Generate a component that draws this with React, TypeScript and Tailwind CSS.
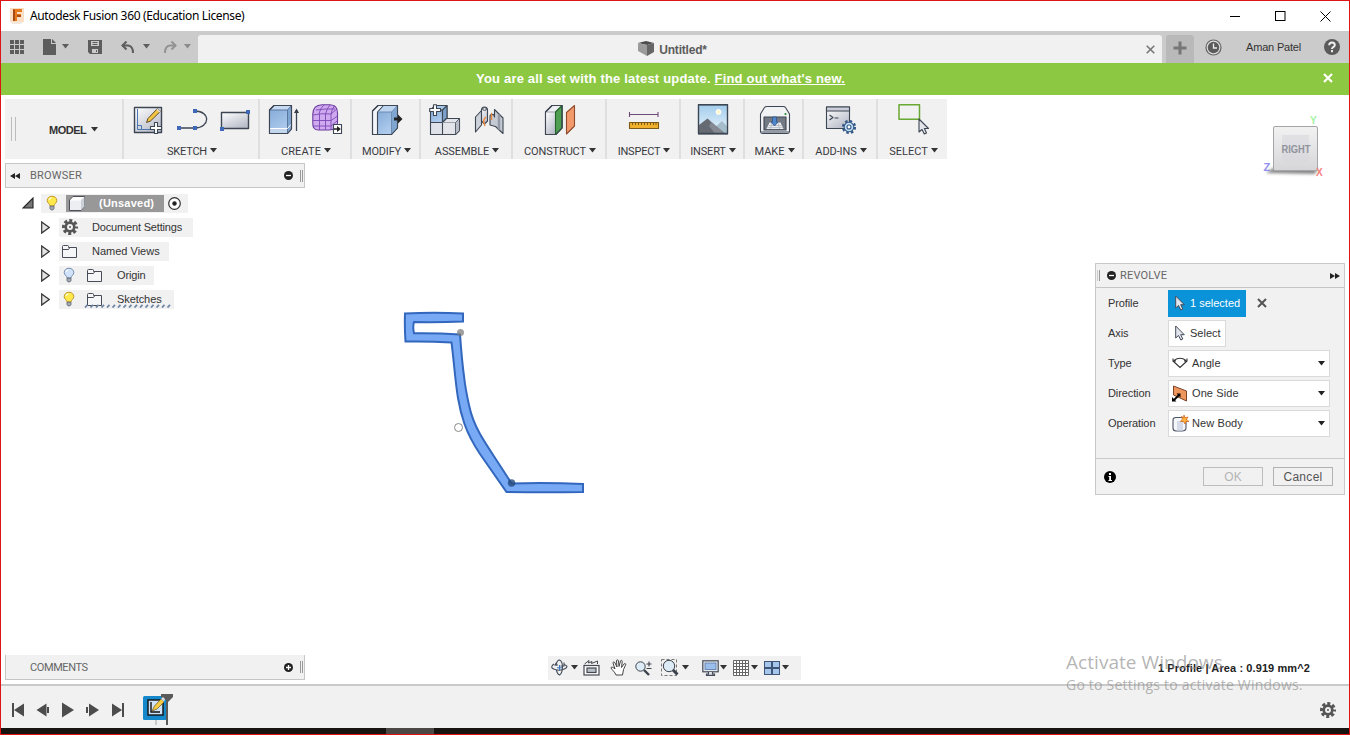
import type { ReactNode } from "react";

const Caret = ({ className = "text-[#333]" }: { className?: string }) => (
  <svg className={`shrink-0 ${className}`} width="7" height="5" viewBox="0 0 7 5" fill="currentColor">
    <path d="M0 0H7L3.5 4.6Z" />
  </svg>
);

const Icon = ({ children }: { children: ReactNode }) => (
  <svg className="shrink-0" width="32" height="32" viewBox="0 0 32 32" fill="none" stroke="#3d4653" strokeWidth="1.1" strokeLinejoin="round">
    {children}
  </svg>
);

const Gradients = () => (
  <svg className="absolute" width="0" height="0">
    <defs>
      <linearGradient id="silver" x1="0" y1="0" x2="0.7" y2="1">
        <stop offset="0" stopColor="#fff" />
        <stop offset="1" stopColor="#b8bcc8" />
      </linearGradient>
      <linearGradient id="blue" x1="0" y1="0" x2="0.5" y2="1">
        <stop offset="0" stopColor="#86acd8" />
        <stop offset="1" stopColor="#aecbed" />
      </linearGradient>
      <linearGradient id="sky" x1="0" y1="0" x2="0" y2="1">
        <stop offset="0" stopColor="#a3cdec" />
        <stop offset="1" stopColor="#eaf6fd" />
      </linearGradient>
      <linearGradient id="cube" x1="0" y1="0" x2="0" y2="1">
        <stop offset="0" stopColor="#f2f2f3" />
        <stop offset="1" stopColor="#d6d6d8" />
      </linearGradient>
      <filter id="soft" x="-30%" y="-100%" width="160%" height="300%">
        <feGaussianBlur stdDeviation="1.6" />
      </filter>
    </defs>
  </svg>
);

const SketchIcon = () => (
  <Icon>
    <rect x="2.500" y="3.500" width="27" height="25" fill="url(#silver)" strokeWidth="1.400" />
    <path d="M5.500 5V25.500H20M5.500 21.500H9.500V25" stroke="#4a78b5" strokeWidth="1" />
    <path d="M14.500 18.500L16 14.500L25.500 4.500L28.500 7.300L18.500 17Z" fill="#f5c542" stroke="#5a4a2a" strokeWidth="1" />
    <path d="M25 5L28 8" stroke="#ddd" strokeWidth="1.600" />
    <path d="M22.500 18.500H25.500V22.500H29.500V25.500H25.500V29.500H22.500V25.500H18.500V22.500H22.500Z" fill="#fff" strokeWidth="1.100" />
  </Icon>
);
const LineIcon = () => (
  <Icon>
    <path d="M3 24H19C34 24 35 7 19 7" strokeWidth="1.300" />
    <path d="M1 22h4v4H1zM17 22h4v4h-4zM17 5h4v4h-4z" fill="#3f68b8" stroke="none" />
  </Icon>
);
const RectIcon = () => (
  <Icon>
    <rect x="1.500" y="8.500" width="27" height="16" fill="url(#silver)" strokeWidth="1.400" />
    <path d="M26 6h4v4h-4zM0 23h4v4H0z" fill="#3f68b8" stroke="none" />
  </Icon>
);
const ExtrudeIcon = () => (
  <Icon>
    <path d="M1.500 6L6 1.500H23.500V25L19.500 29.500H1.500Z" fill="#c5daf2" />
    <path d="M1.500 6H19.500V29.500H1.500Z" fill="url(#blue)" stroke="none" />
    <path d="M1.500 25H19.500V29.500H1.500Z" fill="#c4d6ec" stroke="none" />
    <path d="M19.500 6L23.500 1.500V25L19.500 29.500Z" fill="#7fa5d1" stroke="none" />
    <path d="M1.500 6H19.500L23.500 1.500M19.500 6V29" stroke="#58779e" strokeWidth="1" />
    <path d="M2 24.500H19.500L23 20.500" stroke="#fff" strokeWidth="1" />
    <path d="M1.500 6L6 1.500H23.500V25L19.500 29.500H1.500Z" />
    <path d="M28.500 27V6" strokeWidth="1.300" />
    <path d="M26 9L28.500 4.500L31 9Z" fill="#343c47" stroke="none" />
  </Icon>
);
const FormIcon = () => (
  <Icon>
    <path d="M.800 10C1 4 5 1 10 .800H18C23 1 25.500 4 25.500 9V19C25 23 22 26 17 26H6C3 26 .800 24 .800 20Z" fill="#cfaaf0" stroke="#6a3d9d" />
    <path d="M1 11Q10 9 19 10L25 5M19 10V26M1 16.500H19L25.500 12M1 22H19L25 17M7.500 10V26M13.500 10V26M7 10Q8 4 12 1M13.500 10Q15 4 18 1M19 10Q20 5 22.500 1.500M4 6Q14 4.500 23 5" stroke="#7c48b3" strokeWidth=".9" />
    <rect x="21.500" y="20.500" width="8" height="9" fill="#fff" />
    <path d="M22 24.300H25V22L28.800 25L25 28V25.700H22Z" fill="#222" stroke="none" />
  </Icon>
);
const ModifyIcon = () => (
  <Icon>
    <path d="M1.500 7L7 1.500H26.500V24L20.500 30.500H1.500Z" fill="#f1f4f8" />
    <path d="M6.500 8L12 1.500H26.500L20.500 8Z" fill="#bed5ef" stroke="none" />
    <path d="M6.500 8H20.500V30.500H6.500Z" fill="url(#blue)" stroke="none" />
    <path d="M20.500 8L26.500 2V24L20.500 30Z" fill="#7fa5d1" stroke="none" />
    <path d="M6.500 30V8L12 2" />
    <path d="M6.500 8H20.500L26 2M20.500 8V30" stroke="#6987ac" strokeWidth=".9" />
    <path d="M1.500 7L7 1.500H26.500V24L20.500 30.500H1.500Z" />
    <path d="M23 13.500H27V10.500L31.500 15L27 19.500V16.500H23Z" fill="#222" stroke="none" />
  </Icon>
);
const ComponentIcon = () => (
  <Icon>
    <path d="M1.500 18.500H14.500V30.500H1.500Z" fill="#dfe2e9" />
    <path d="M1.500 6H13.500V18.500H1.500Z" fill="url(#blue)" />
    <path d="M1.500 6L6 1.500H18V14L13.500 18.500V6Z" fill="#a8c7e8" />
    <path d="M13.500 6L18 1.500V14L13.500 18.500Z" fill="#7ba0cc" />
    <path d="M13.500 18.500L17.500 14.500H30.500V26.500L26.500 30.500H13.500Z" fill="#e3e5ea" />
    <path d="M26.500 18.500L30.500 14.500V26.500L26.500 30.500Z" fill="#b7bcc7" strokeWidth=".800" />
    <path d="M13.500 18.500H26.500" stroke="#8c929e" strokeWidth=".800" />
    <path d="M4.500 .700H7.500V4.500H11.500V7.500H7.500V11.500H4.500V7.500H.700V4.500H4.500Z" fill="#fff" />
  </Icon>
);
const JointIcon = () => (
  <Icon>
    <path d="M2.500 13L8.500 6.500V21L2.500 28Z" fill="#cdd1d8" />
    <path d="M8.500 6C8.500 2 14.500 2 14.500 6V17L11.500 20L8.500 17Z" fill="url(#silver)" />
    <path d="M21.500 5.500L30 14V29.500L22.500 22.500L17 21V13C17 9.500 21.500 9.500 21.500 13Z" fill="#c5cad3" />
    <path d="M26 10.500V25.500" stroke="#949ba7" strokeWidth="2.500" />
    <ellipse cx="11.500" cy="5" rx="2" ry="1.300" fill="#fff" strokeWidth="1" />
    <path d="M13 13C9 16 11 20 12 22M18.500 9V16" stroke="#ee8a3c" strokeWidth="1.400" />
  </Icon>
);
const PlaneIcon = () => (
  <Icon>
    <path d="M1.500 8L8 1.500H18V24L12 30.500H1.500Z" fill="#eceef1" />
    <path d="M1.500 8H11.500V30.500H1.500Z" fill="url(#silver)" stroke="#8a909b" strokeWidth=".800" />
    <path d="M11.500 8L18 1.500V24L11.500 30.500Z" fill="#4f9f51" stroke="#24622a" />
    <path d="M1.500 8L8 1.500H18V24L12 30.500H1.500Z" />
    <path d="M22.500 8.500L30.500 1.500V22L22.500 30Z" fill="#f39a6d" stroke="#8f4a2a" />
  </Icon>
);
const MeasureIcon = () => (
  <Icon>
    <path d="M1.500 10.500H30M1.500 8V13M30 8V13" stroke="#6e4a78" strokeWidth="1.100" />
    <rect x="1.500" y="18.500" width="29" height="6" fill="#efb02e" stroke="#7c5a19" />
    <path d="M4.500 18.500V21M7.500 18.500V21M10.500 18.500V21M13.500 18.500V21M16.500 18.500V21M19.500 18.500V21M22.500 18.500V21M25.500 18.500V21M28 18.500V21" stroke="#68480f" strokeWidth=".8" />
  </Icon>
);
const ImageIcon = () => (
  <Icon>
    <rect x="1.500" y="1" width="29" height="29" fill="url(#sky)" />
    <circle cx="21.500" cy="8" r="2.500" fill="#fff9cf" stroke="#fff" strokeWidth="1" />
    <path d="M16 25L25 17L30 22V29.500H15Z" fill="#a5bccb" stroke="none" />
    <path d="M2 21L10.500 14.500L19 22L28 29.500H2Z" fill="#666a73" stroke="none" />
    <path d="M10.500 14.500L14 19L12 22L18 29.500H28L19 22Z" fill="#858992" stroke="none" />
    <rect x="1.500" y=".500" width="29" height="29" strokeWidth="1.300" />
  </Icon>
);
const MakeIcon = () => (
  <Icon>
    <path d="M1.500 10L5.500 3.500Q6 2.500 8 2.500H24Q26 2.500 26.500 3.500L30.500 10V27Q30.500 29.500 28 29.500H4Q1.500 29.500 1.500 27Z" fill="#f1f2f4" />
    <path d="M2 27H30Q30 29 28 29H4Q2 29 2 27Z" fill="#959ba5" stroke="none" />
    <rect x="5" y="13" width="22" height="13" fill="#737982" />
    <path d="M7.500 25L10.500 18.500H21.500L24.500 25Z" fill="#e6e9ed" stroke="none" />
    <path d="M10 21.500H22.500M9 23.500H23.500M13 18.500L11.500 25M19 18.500L20.500 25" stroke="#a6acb6" strokeWidth=".6" />
    <path d="M13.500 13H17.500V18H19L15.500 22L12 18H13.500Z" fill="#4d86cb" stroke="#2f568b" strokeWidth=".8" />
    <circle cx="26.500" cy="10" r="1.100" fill="#258d31" stroke="none" />
  </Icon>
);
const AddinsIcon = () => (
  <Icon>
    <rect x="1.500" y="3" width="23" height="21.500" fill="url(#silver)" />
    <rect x="1.500" y="3" width="23" height="4" fill="#cbced8" />
    <path d="M4.500 11L8 13.500L4.500 16M9.500 14H13.500" />
    <circle cx="24" cy="23" r="5.700" stroke="#365b87" strokeWidth="2.800" strokeDasharray="2.400 2.075" />
    <circle cx="24" cy="23" r="4.800" fill="#c1dcf3" stroke="#365b87" />
    <circle cx="24" cy="23" r="2" fill="#fff" stroke="#365b87" />
  </Icon>
);
const SelectIcon = () => (
  <Icon>
    <rect x="1" y=".800" width="20.500" height="14.500" stroke="#69a832" strokeWidth="1.500" />
    <path d="M21 15V28L24 25.500L26.300 30L28.500 29L26.400 24.500H30.500Z" fill="#e3e5ea" />
  </Icon>
);

type GroupProps = { label: string; width: string; tracking: string; children: ReactNode };
const Group = ({ label, width, tracking, children }: GroupProps) => (
  <div className={`flex h-full shrink-0 flex-col items-center pl-[2px] ${width}`}>
    <div className="flex h-10 items-start justify-center gap-3 pt-[5px]">{children}</div>
    <div className="mt-[7px] flex h-3.5 items-center gap-[3px]">
      <span className={`font-[Roboto,sans-serif] text-[11px] leading-[14px] whitespace-nowrap text-[#3a3a3f] ${tracking}`}>{label}</span>
      <Caret className="mb-[3px] text-[#333]" />
    </div>
  </div>
);

const Toolbar = () => (
  <div className="ml-1 flex h-[60px] w-[942px] divide-x-2 divide-[#dedfe0] bg-[#f1f1f1]">
    <div className="flex w-[119px] shrink-0 items-center pl-[6px]">
      <span className="h-6 w-[5px] border-x border-[#bcbcbc]" />
      <span className="ml-[33px] mr-[5px] pt-[2px] text-[11px] font-bold tracking-[-0.5px] text-[#333]">MODEL</span>
      <Caret />
    </div>
    <Group label="SKETCH" width="w-[136px]" tracking="tracking-[-0.2px]"><SketchIcon /><LineIcon /><RectIcon /></Group>
    <Group label="CREATE" width="w-[92px]" tracking="tracking-[0.1px]"><ExtrudeIcon /><FormIcon /></Group>
    <Group label="MODIFY" width="w-[69px]" tracking="tracking-[-0.2px]"><ModifyIcon /></Group>
    <Group label="ASSEMBLE" width="w-[92px]" tracking="tracking-[-0.1px]"><ComponentIcon /><JointIcon /></Group>
    <Group label="CONSTRUCT" width="w-[94px]" tracking="tracking-[-0.150px]"><PlaneIcon /></Group>
    <Group label="INSPECT" width="w-[74px]" tracking="tracking-[-0.2px]"><MeasureIcon /></Group>
    <Group label="INSERT" width="w-[64px]" tracking="tracking-[-0.2px]"><ImageIcon /></Group>
    <Group label="MAKE" width="w-[59px]" tracking="tracking-[0px]"><MakeIcon /></Group>
    <Group label="ADD-INS" width="w-[74px]" tracking="tracking-[-0.1px]"><AddinsIcon /></Group>
    <Group label="SELECT" width="w-[69px]" tracking="tracking-[0px]"><SelectIcon /></Group>
  </div>
);

const ViewCube = () => (
  <svg width="66" height="70" viewBox="0 0 66 70" className="font-[Liberation_Sans,sans-serif]">
    <path d="M6 61L13 56H58L55 62Z" fill="#888" filter="url(#soft)" />
    <rect x="13.500" y="14.500" width="44" height="44" rx="1.500" fill="url(#cube)" stroke="#a5a5a8" />
    <rect x="22" y="23" width="27" height="27" fill="#d8d9dd" opacity=".6" />
    <text x="21.500" y="41" fontSize="11.500" fontWeight="700" fill="#90939d" textLength="29" lengthAdjust="spacingAndGlyphs">RIGHT</text>
    <text x="50" y="11.500" fontSize="10" fontWeight="700" fill="#a4f3a4">Y</text>
    <text x="3.500" y="59" fontSize="11" fontWeight="700" fill="#9090f0">Z</text>
    <text x="56" y="64" fontSize="10" fontWeight="700" fill="#f58080">X</text>
  </svg>
);

const TitleBar = () => (
  <header className="flex h-[30px] shrink-0 items-center bg-white pl-2">
    <svg width="16" height="16" viewBox="0 0 16 16">
      <rect x="1" y="0" width="14" height="14" fill="#fadfc4" />
      <path d="M4 1H13V4H8V6H12V9H8V13H4Z" fill="#e77b22" />
      <path d="M4 1L6 2V13H4ZM8 6L9 7H12V9H8Z" fill="#a94c12" />
      <path d="M2 14H14L12 16H3Z" fill="#f3e8dd" />
    </svg>
    <span className="ml-[5px] font-[Noto_Sans,sans-serif] text-xs tracking-[-0.360px] whitespace-nowrap text-black">Autodesk Fusion 360 (Education License)</span>
    <div className="ml-auto mr-[18px] flex items-center gap-[34px]">
      <svg width="11" height="11" stroke="#000" fill="none"><path d="M0 5.500H10" /></svg>
      <svg width="11" height="11" stroke="#000" fill="none"><rect x=".500" y=".500" width="9.500" height="9" /></svg>
      <svg width="11" height="11" stroke="#000" fill="none"><path d="M.500 .500L10.500 10.500M10.500 .500L.500 10.500" /></svg>
    </div>
  </header>
);

const TabBar = () => (
  <nav className="flex h-8 shrink-0 items-end bg-[#cbcbcb]">
    <div className="flex h-8 w-[197px] items-center pl-[9px] text-[#5d5d5d]">
      <svg width="14" height="14" viewBox="0 0 14 14" fill="currentColor"><path d="M0 0h4v4H0zM5 0h4v4H5zM10 0h4v4h-4zM0 5h4v4H0zM5 5h4v4H5zM10 5h4v4h-4zM0 10h4v4H0zM5 10h4v4H5zM10 10h4v4h-4z" /></svg>
      <svg className="ml-[19px]" width="14" height="16" viewBox="0 0 14 16" fill="currentColor"><path d="M0 0H8V5H13V16H0ZM9 0L13 4H9Z" /></svg>
      <Caret className="ml-[5px] mb-[2px] text-[#5d5d5d]" />
      <svg className="ml-[19px]" width="15" height="15" viewBox="0 0 15 15" fill="currentColor" fillRule="evenodd"><path d="M0 0H14V14H2L0 12ZM3 1V6H11V1ZM4 9V13H10V9ZM8 10H9V12H8ZM4.500 2H9.500V3H4.500ZM4.500 4H9.500V5H4.500Z" /></svg>
      <svg className="ml-[18px]" width="14" height="13" viewBox="0 0 14 13" fill="none" stroke="currentColor" strokeWidth="2"><path d="M1 4.500H7Q12 5 12 12" /><path d="M5.500 .500L1.500 4.500L5.500 8.500" /></svg>
      <Caret className="ml-[8px] mb-[2px] text-[#5d5d5d]" />
      <svg className="ml-[13px] text-[#939393]" width="14" height="13" viewBox="0 0 14 13" fill="none" stroke="currentColor" strokeWidth="2"><path d="M13 4.500H7Q2 5 2 12" /><path d="M8.500 .500L12.500 4.500L8.500 8.500" /></svg>
      <Caret className="ml-[7px] mb-[2px] text-[#8b8b8b]" />
    </div>
    <div className="flex h-7 w-[964px] items-center rounded-t-[3px] bg-[#f1f1f1] pr-[7px]">
      <div className="flex flex-1 items-center justify-center gap-1 pl-[1px]">
        <svg width="17" height="16" viewBox="0 0 17 16"><path d="M0 2L8 0L16 2L9 4Z" fill="#4d4d4d" /><path d="M0 2L9 4V15L0 10Z" fill="#9b9b9b" /><path d="M9 4L16 2V11L9 15Z" fill="#666" /></svg>
        <span className="pt-[1px] text-xs font-bold tracking-[-0.2px] text-[#5c5c5c]">Untitled*</span>
      </div>
      <svg width="9" height="9" stroke="#777" strokeWidth="1.600"><path d="M.700 .700L8.300 8.300M8.300 .700L.700 8.300" /></svg>
    </div>
    <div className="ml-1 flex h-7 w-7 items-center justify-center rounded-t-[3px] bg-[#b9b9b9]">
      <svg className="-mt-[2px]" width="14" height="14" stroke="#777" strokeWidth="3"><path d="M7 .500V13.500M.500 7H13.500" /></svg>
    </div>
    <div className="flex h-8 flex-1 items-center pl-[11px] pr-[9px]">
      <svg width="17" height="17" viewBox="0 0 17 17"><circle cx="8.500" cy="8.500" r="7.500" fill="#ddd" stroke="#666" strokeWidth="1.200" /><circle cx="8.500" cy="8.500" r="5.700" fill="#5b5b5b" /><path d="M8.500 4.500V9H12" fill="none" stroke="#eee" strokeWidth="1.300" /></svg>
      <span className="ml-[24px] text-[11px] tracking-[-0.180px] whitespace-nowrap text-[#333]">Aman Patel</span>
      <svg className="ml-auto" width="16" height="16" viewBox="0 0 16 16"><circle cx="8" cy="8" r="8" fill="#5b5b5b" /><path d="M5.200 6.200Q5.300 3.500 8 3.500Q10.800 3.500 10.800 6Q10.800 7.300 9 8.300Q8 9 8 10" fill="none" stroke="#eee" strokeWidth="2" /><rect x="7" y="11" width="2" height="2.200" fill="#eee" /></svg>
    </div>
  </nav>
);

const DoubleArrow = ({ flip = false }: { flip?: boolean }) => (
  <svg className={flip ? "rotate-180" : ""} width="10" height="6" viewBox="0 0 10 6" fill="#222"><path d="M5 0V6L0 3ZM10 0V6L5 3Z" /></svg>
);

const RoundToggle = ({ plus = false }: { plus?: boolean }) => (
  <svg width="9" height="9" viewBox="0 0 9 9"><circle cx="4.500" cy="4.500" r="4.500" fill="#222" /><path d={plus ? "M2 4.500H7M4.500 2V7" : "M2 4.500H7"} stroke="#fff" strokeWidth="1.300" /></svg>
);

const Bulb = ({ off = false }: { off?: boolean }) => (
  <svg width="12" height="16" viewBox="-0.5 -0.5 13 17">
    <path d="M6 .700C2.800 .700 .800 2.800 .800 5.300C.800 8 3.500 8.700 3.700 11H8.300C8.500 8.700 11.200 8 11.200 5.300C11.200 2.800 9.200 .700 6 .700Z" fill={off ? "#cfe2fa" : "#ffe94d"} stroke={off ? "#7187a5" : "#b99226"} />
    <path d="M2.800 4.500Q3.500 2.500 5.500 2.300" fill="none" stroke="#fff" strokeWidth="1.300" />
    <path d="M3.800 11.500H8.200V14L7 15.500H5L3.800 14Z" fill="#a4a9b3" stroke="#555d69" strokeWidth=".800" />
  </svg>
);

const Folder = () => (
  <svg width="16" height="13" viewBox="0 0 16 13" fill="#f5f6f8" stroke="#474c56" strokeWidth="1"><path d="M.500 12.500V1.500Q.500 .500 1.500 .500H5.500Q6.500 .500 6.500 1.500V2.500H14.500V12.500Z" /><path d="M1 4.500H6.500L7.500 3" fill="none" /></svg>
);

const Gear = () => (
  <svg width="16" height="16" viewBox="0 0 16 16" fill="none" stroke="#555"><circle cx="8" cy="8" r="6.500" strokeWidth="3" strokeDasharray="3 2.105" strokeDashoffset="1.500" /><circle cx="8" cy="8" r="4.300" strokeWidth="2.700" /><circle cx="8" cy="8" r="1" fill="#555" stroke="none" /></svg>
);

const Expander = () => (
  <svg width="9" height="13" viewBox="0 0 9 13" fill="#e3e3e3" stroke="#333" strokeWidth="1.200"><path d="M.700 .900L8.200 6.500L.700 12.100Z" /></svg>
);

const TreeRow = ({ children, width, label, gap, squiggle = false }: { children: ReactNode; width: string; label: string; gap: string; squiggle?: boolean }) => (
  <div className="flex h-6 items-center pl-[40px]">
    <Expander />
    <div className={`relative ml-[9px] flex h-[19px] items-center bg-[#f1f1f1] pl-[3px] ${width}`}>
      {children}
      <span className={`text-[11px] whitespace-nowrap text-[#333] ${gap}`}>{label}</span>
      {squiggle && (
        <svg className="absolute bottom-[1px] left-[25px]" width="90" height="4" viewBox="0 0 90 4"><path d="M1 3.500L3.500 .800M6.500 3.500L9 .800M12 3.500L14.500 .800M17.500 3.500L20 .800M23 3.500L25.500 .800M28.500 3.500L31 .800M34 3.500L36.500 .800M39.500 3.500L42 .800M45 3.500L47.500 .800M50.500 3.500L53 .800M56 3.500L58.500 .800M61.500 3.500L64 .800M67 3.500L69.500 .800M72.500 3.500L75 .800M78 3.500L80.500 .800M83.500 3.500L86 .800" stroke="#6f86a8" strokeWidth="1.800" /></svg>
      )}
    </div>
  </div>
);

const Browser = () => (
  <section className="mt-1">
    <div className="ml-1 flex h-[25px] w-[300px] items-center border border-[#c6c6c6] bg-[#f1f1f1] pl-1 pr-[1px]">
      <DoubleArrow />
      <span className="ml-[10px] pt-[2px] font-[Roboto,sans-serif] text-[11px] tracking-[0.2px] text-[#666]">BROWSER</span>
      <span className="ml-auto mr-[7px]"><RoundToggle /></span>
      <span className="h-3 w-[3px] border-x border-[#999]" />
    </div>
    <div className="pt-[3px]">
      <div className="flex h-6 items-center pl-[21px]">
        <svg width="12" height="12" viewBox="0 0 12 12"><path d="M11 1V11H1Z" fill="#777" stroke="#222" strokeWidth="1.100" /></svg>
        <div className="ml-[7px] flex h-[19px] w-[147px] items-center bg-[#f1f1f1] pl-[5px]">
          <Bulb />
          <div className="ml-[8px] flex h-[17px] w-[98px] items-center bg-[#989898] pl-[3px]">
            <svg width="17" height="15" viewBox="0 0 17 15" fill="#fff" stroke="#4d5057"><path d="M.500 4L4 .500H15.500V10.500L12 14.500H.500Z" /><path d="M1 4.500H12V14H1Z" fill="#eceef1" stroke="none" /><path d="M12 4L15.500 1V10.500L12 14Z" fill="#ccd0d7" stroke="none" /></svg>
            <span className="ml-[13px] text-[11px] font-bold tracking-[0.230px] text-white">(Unsaved)</span>
          </div>
          <svg className="ml-[4px]" width="13" height="13" viewBox="0 0 13 13"><circle cx="6.500" cy="6.500" r="5.800" fill="#fff" stroke="#333" strokeWidth="1.200" /><circle cx="6.500" cy="6.500" r="2.200" fill="#222" /></svg>
        </div>
      </div>
      <TreeRow label="Document Settings" width="w-[134px]" gap="ml-[14px] tracking-[-0.170px]"><Gear /></TreeRow>
      <TreeRow label="Named Views" width="w-[110px]" gap="ml-[14px]"><Folder /></TreeRow>
      <TreeRow label="Origin" width="w-[95px]" gap="ml-[14px] tracking-[-0.15px]"><span className="ml-[1px]"><Bulb off /></span><span className="ml-[12px]"><Folder /></span></TreeRow>
      <TreeRow label="Sketches" width="w-[115px]" gap="ml-[14px] tracking-[-0.08px]" squiggle><span className="ml-[1px]"><Bulb /></span><span className="ml-[12px]"><Folder /></span></TreeRow>
    </div>
  </section>
);

const Cursor = () => (
  <svg width="10" height="16" viewBox="0 0 10 16"><path d="M.700 1V13L3.500 10.500L5.800 15L7.800 14L5.700 9.700H9.300Z" fill="#e2e5ed" stroke="#444b58" strokeWidth="1" /></svg>
);

const Field = ({ label, children }: { label: string; children: ReactNode }) => (
  <div className="flex h-[30px] items-center">
    <span className="w-[60px] text-[11px] tracking-[-0.1px] text-[#333]">{label}</span>
    {children}
  </div>
);

const Dropdown = ({ value, children }: { value: string; children: ReactNode }) => (
  <div className="flex h-[27px] w-[162px] items-center border border-[#dadada] bg-white pl-[3px] pr-[4px]">
    <span className="flex w-5 shrink-0 items-center">{children}</span>
    <span className="text-[11px] tracking-[0.1px] text-[#333]">{value}</span>
    <Caret className="ml-auto text-[#222]" />
  </div>
);

const RevolveDialog = () => (
  <section className="mr-1 mt-[104px] flex h-[232px] w-[250px] flex-col border border-[#c9c9c9] bg-[#f1f1f1]">
    <div className="flex h-6 shrink-0 items-center border-b border-[#c6c6c6] pl-[1px] pr-[4px]">
      <span className="mr-[7px] h-[11px] w-[3px] border-x border-[#999] border-l-[#ccc]" />
      <RoundToggle />
      <span className="ml-[4px] pt-[2px] font-[Roboto,sans-serif] text-[11px] tracking-[0.2px] text-[#666]">REVOLVE</span>
      <span className="ml-auto"><DoubleArrow flip /></span>
    </div>
    <div className="flex-1 pl-[12px]">
      <Field label="Profile">
        <div className="flex h-[27px] w-[78px] items-center bg-[#0a93d9] pl-[7px] text-[11px] whitespace-nowrap text-white"><Cursor /><span className="ml-[5px]">1 selected</span></div>
        <svg className="ml-[11px]" width="10" height="10" stroke="#555" strokeWidth="2"><path d="M1 1L9 9M9 1L1 9" /></svg>
      </Field>
      <Field label="Axis">
        <div className="flex h-[27px] w-[58px] items-center border border-[#dadada] bg-white pl-[6px] text-[11px] text-[#333]"><Cursor /><span className="ml-[5px]">Select</span></div>
      </Field>
      <Field label="Type"><Dropdown value="Angle"><svg width="16" height="12" viewBox="0 0 16 12" fill="none" stroke="#333" strokeWidth="1.100"><path d="M1 4L8 10.500L15 4M2 3.500Q8 -1 14 3.500M1 1.500V4H4M15 1.500V4H12" /></svg></Dropdown></Field>
      <Field label="Direction"><Dropdown value="One Side"><svg width="16" height="17" viewBox="0 0 16 17"><path d="M1.500 1L14.500 6V16L1.500 10Z" fill="#ec955c" stroke="#7b4428" /><path d="M2 15L7 10" stroke="#000" strokeWidth="1.800" /><path d="M0 16.500V12L4.500 16.500ZM8.500 8.500V12.500L4.500 8.500Z" fill="#000" /></svg></Dropdown></Field>
      <Field label="Operation"><Dropdown value="New Body"><svg width="17" height="17" viewBox="0 0 17 17"><path d="M1 5Q1 2.500 4 2.500H10Q14 2.500 14 5V13Q14 16 10 16H4Q1 16 1 13Z" fill="#f5f6fa" stroke="#4d5565" strokeWidth="1.100" /><path d="M5 6H11V15.500H5Z" fill="#d5dbe9" /><path d="M12 0L13 2.800L16 2L14.500 4.500L17 6.500L14 6.500L13 9L11.500 6.500L8.500 6.500L10.500 4L9.500 1.500L11.500 2.500Z" fill="#ffb13a" stroke="#cc5d16" strokeWidth=".700" /></svg></Dropdown></Field>
    </div>
    <div className="flex h-9 shrink-0 items-center border-t border-[#c9c9c9] pl-[8px] pr-[11px]">
      <svg width="12" height="12" viewBox="0 0 12 12"><circle cx="6" cy="6" r="6" fill="#000" /><path d="M5 2H7V4H5ZM4.500 5H7V9H8V10H4.500V9H5.200V6H4.500Z" fill="#fff" /></svg>
      <div className="ml-auto mr-[10px] flex h-[19px] w-[60px] items-center justify-center border border-[#bdbdbd] text-xs text-[#b5b5b5]">OK</div>
      <div className="flex h-[19px] w-[60px] items-center justify-center border border-[#b2b2b2] text-xs tracking-[0.3px] text-[#555]">Cancel</div>
    </div>
  </section>
);

const ProfileDrawing = () => (
  <svg className="absolute left-[399px] top-[209px]" width="190" height="200" viewBox="400 304 190 200">
    <path d="M405 313.500Q434 312 463 313.500V321.500Q438 322.500 414 322Q412.500 327 414 333.300Q438 333 460 334.500C461 348 462 362 464 376C465 386 467 396 469 405C471 415 475 425 480 434C488 448 500 465 511.500 483.500Q547 482.500 583 484V492Q545 492.500 506.500 492L480 454C472 442 468 434 464.500 424C461 414 459.500 407 458 398C455 380 454 361 451.500 342.500Q428 341 405.500 341.500Q404.500 327 405 313.500Z" fill="#78a9f5" stroke="#3267bd" strokeWidth="2" />
    <circle cx="460.500" cy="332.500" r="3.500" fill="#777" opacity=".7" />
    <circle cx="511.500" cy="483" r="3.800" fill="#254a7c" opacity=".8" />
    <circle cx="458.500" cy="427.500" r="4" fill="#fff" stroke="#888" />
  </svg>
);

const NavBar = () => (
  <div className="ml-[243px] flex h-[24px] w-[253px] items-center bg-[#f1f1f1] pl-[3px]">
    <svg width="17" height="17" viewBox="0 0 17 17" fill="none" stroke="#434b58" strokeWidth="1.100"><path d="M5 6.500Q6 1 8.500 1Q11.500 2 11.500 8.500Q11 15 8.500 16Q6 15 5.500 11" /><path d="M3 5Q-.500 7.500 1.500 9.500Q8 13 14.500 9.500Q18 7 13 5.500" /><path d="M7 6H4L5.500 3.500M13 3.500V7H9.500" /><path d="M8.500 6V11.500M6 8.800H11" stroke="#3a76bd" /></svg>
    <Caret className="ml-[3px] text-[#333]" />
    <svg className="ml-[5px]" width="17" height="17" viewBox="0 0 17 17" fill="none" stroke="#434851" strokeWidth="1.200"><rect x="1" y="6.500" width="15" height="9.500" fill="#fff" /><rect x="4" y="9" width="9" height="4.500" fill="#b9bec7" /><path d="M1.500 5L6 1.500L5.500 4L9 2.500L8.500 4.500L14.500 2V5" strokeWidth="1" /></svg>
    <svg className="ml-[10px]" width="17" height="17" viewBox="0 0 17 17" fill="#fff" stroke="#444" strokeWidth="1"><path d="M6 16C5 13 2 11 1 9C1 7.500 3 8 5 10L3 4C3 2.500 4.500 2.500 5 4L7 8L6.500 2C6.500 .500 8.200 .500 8.500 2L9 7.500L10.500 2C11 .800 12.400 1.200 12.200 2.800L11.500 8.500L14 5C15 4 16.300 4.800 15.500 6.200L13.500 10.500L12.500 16Z" /></svg>
    <svg className="ml-[8px]" width="17" height="16" viewBox="0 0 17 16" fill="none" stroke="#3c424d"><circle cx="5.500" cy="6.500" r="4.700" fill="#dcebf5" /><path d="M9 10L14 15" strokeWidth="2.400" /><path d="M11.500 4H16.500M14 1.500V6.500M11.500 8.500H16.500" strokeWidth="1.100" /></svg>
    <svg className="ml-[9px]" width="18" height="17" viewBox="0 0 18 17" fill="none" stroke="#3c424d"><path d="M.500 .500H15.500V16.500H.500Z" strokeDasharray="3 2" stroke="#777" /><circle cx="8" cy="7" r="5.700" fill="#dcebf5" /><path d="M12 11L16.500 15.500" strokeWidth="3" /></svg>
    <Caret className="ml-[3px] text-[#333]" />
    <svg className="ml-[13px]" width="17" height="16" viewBox="0 0 17 16" fill="#e5e8ed" stroke="#444b58" strokeWidth="1.200"><rect x=".800" y=".800" width="15.400" height="11" /><rect x="3" y="3" width="11" height="6.500" fill="#9bbfed" stroke="#5579a7" strokeWidth=".8" /><path d="M6.500 12V14H4.500V15.300H12.500V14H10.500V12" /></svg>
    <Caret className="ml-[1px] text-[#333]" />
    <svg className="ml-[6px]" width="16" height="16" viewBox="0 0 16 16" fill="#fff" stroke="#666"><path d="M.500 .500H15.500V15.500H.500ZM3.500 .500V15.500M6.500 .500V15.500M9.500 .500V15.500M12.500 .500V15.500M.500 3.500H15.500M.500 6.500H15.500M.500 9.500H15.500M.500 12.500H15.500" /></svg>
    <Caret className="ml-[2px] text-[#333]" />
    <svg className="ml-[6px]" width="16" height="14" viewBox="0 0 16 14" fill="#a7c6eb" stroke="#3f5576" strokeWidth="1"><rect x=".500" y=".500" width="7" height="6" /><rect x="8.500" y=".500" width="7" height="6" /><rect x=".500" y="7.500" width="7" height="6" /><rect x="8.500" y="7.500" width="7" height="6" /></svg>
    <Caret className="ml-[2px] text-[#333]" />
  </div>
);

const Timeline = () => (
  <footer className="flex h-11 shrink-0 items-center border-t-2 border-[#c9c9c9] bg-[#f1f1f1] pl-[11px] pr-[13px] pt-[5px] text-[#4c4c4c]">
    <div className="flex items-center gap-[12px]">
      <svg width="12" height="14" fill="currentColor"><path d="M0 0H2V14H0ZM12 .500V13.500L2 7Z" /></svg>
      <svg width="14" height="14" fill="currentColor"><path d="M10.500 .500V13.500L.500 7ZM11 4H13V10H11Z" /></svg>
      <svg width="12" height="16" fill="currentColor"><path d="M0 .500V15.500L12 8Z" /></svg>
      <svg width="14" height="14" fill="currentColor"><path d="M0 4H2V10H0ZM3 .500V13.500L13 7Z" /></svg>
      <svg width="13" height="14" fill="currentColor"><path d="M0 .500V13.500L10 7ZM10 0H12V14H10Z" /></svg>
    </div>
    <svg className="-mt-[2px] ml-[18px]" width="31" height="32" viewBox="0 0 31 32">
      <rect x="0" y="3" width="24" height="24" rx="1.500" fill="#1588cb" />
      <path d="M13 27V32" stroke="#bbb" strokeWidth="1.500" />
      <path d="M18 1H30V4L25 9V32H23V7L18 4Z" fill="#5a5a5a" />
      <rect x="5" y="7" width="15" height="15" fill="#cfe1f7" stroke="#111" strokeWidth="1.400" />
      <path d="M8 9V19H17" fill="none" stroke="#111" strokeWidth="1.400" />
      <path d="M9 18L11.500 13L18 6L21 9L14 16Z" fill="#f7ca43" stroke="#66511d" strokeWidth=".700" />
      <path d="M18 6L20 4L22 6L21 9Z" fill="#ddd" />
    </svg>
    <span className="ml-auto"><Gear /></span>
  </footer>
);

export default function App() {
  return (
    <div className="relative flex h-[735px] w-[1350px] flex-col overflow-hidden border border-[#df1515] bg-white font-[Liberation_Sans,Arial,sans-serif]">
      <Gradients />
      <TitleBar />
      <TabBar />
      <div className="flex h-8 shrink-0 items-center bg-[#8dc843] pr-[16px] text-[13px] font-bold whitespace-nowrap text-white">
        <span className="ml-[475px] tracking-[0.190px]">You are all set with the latest update. <a className="underline">Find out what's new.</a></span>
        <svg className="-mt-[2px] ml-auto" width="10" height="10" stroke="#fff" strokeWidth="2.200"><path d="M1 1L9 9M9 1L1 9" /></svg>
      </div>
      <main className="relative flex min-h-0 flex-1 flex-col pt-1">
        <ProfileDrawing />
        <div className="flex h-[60px] shrink-0 justify-between">
          <Toolbar />
          <div className="mr-[23px] mt-[13px]"><ViewCube /></div>
        </div>
        <div className="flex min-h-0 flex-1 items-start justify-between">
          <Browser />
          <RevolveDialog />
        </div>
        <div className="mb-1 flex h-[25px] shrink-0 items-center">
          <div className="ml-1 flex h-[25px] w-[300px] items-center border border-t-0 border-[#c6c6c6] bg-[#f1f1f1] pl-6 pr-[1px]">
            <span className="pt-[2px] font-[Roboto,sans-serif] text-[11px] tracking-[-0.4px] text-[#666]">COMMENTS</span>
            <span className="ml-auto mr-[7px]"><RoundToggle plus /></span>
            <span className="h-3 w-[3px] border-x border-[#999]" />
          </div>
          <NavBar />
          <span className="ml-auto mr-[39px] pt-[1px] text-[11px] font-bold tracking-[0.1px] whitespace-nowrap text-[#222]">1 Profile | Area : 0.919 mm^2</span>
        </div>
      </main>
      <Timeline />
      <div className="flex h-[6px] shrink-0 bg-[#171310]"><span className="ml-[385px] w-[48px] bg-[#4b4846]" /></div>
      <div className="pointer-events-none absolute left-[1065px] top-[648px] font-[Open_Sans,sans-serif] whitespace-nowrap text-[#8b8b8b]/65">
        <div className="text-[19px] leading-[27px] tracking-[0.050px]">Activate Windows</div>
        <div className="text-[14px] leading-[18px] tracking-[0.210px]">Go to Settings to activate Windows.</div>
      </div>
    </div>
  );
}
